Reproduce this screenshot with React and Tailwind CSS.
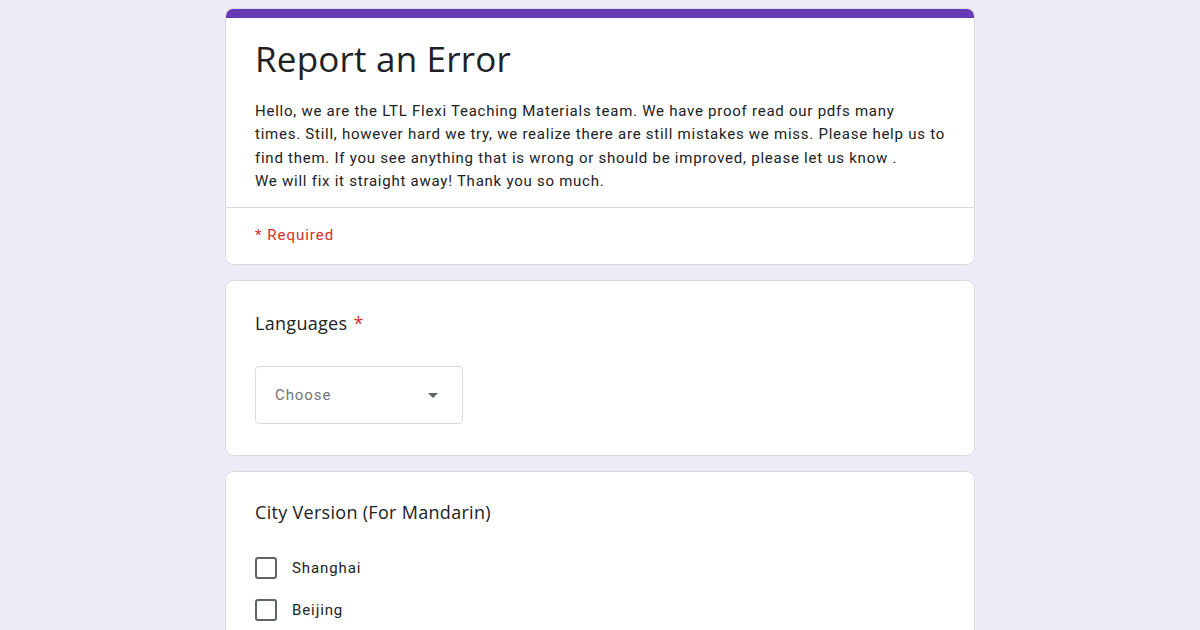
export default function App() {
  return (
    <div className="min-h-screen bg-[#f0ebf8] pt-2">
      <div className="mx-auto w-[750px] flex flex-col gap-[15px]">
        {/* Header card */}
        <div className="bg-white rounded-lg border border-[#dadce0] overflow-hidden">
          <div className="h-[10px] bg-[#673ab7] -mx-px -mt-px" />
          <div className="px-[29px] pt-[20px] pb-[14px]">
            <h1 className="text-[35px] leading-[42px] text-[#202124] font-['Open_Sans',sans-serif] tracking-[0.2px]">
              Report an Error
            </h1>
            <p className="mt-[20px] text-[15px] leading-[23.3px] text-[#202124] font-['Roboto',sans-serif] tracking-[0.75px] -mr-[20px] whitespace-nowrap">
              Hello, we are the LTL Flexi Teaching Materials team. We have proof read our pdfs many
              <br />
              times. Still, however hard we try, we realize there are still mistakes we miss. Please help us to
              <br />
              find them. If you see anything that is wrong or should be improved, please let us know .
              <br />
              We will fix it straight away! Thank you so much.
            </p>
          </div>
          <div className="border-t border-[#dadce0] px-[29px] pt-[14px] pb-[18px]">
            <span className="text-[15px] leading-5 text-[#d93025] font-['Roboto',sans-serif] tracking-[1px]">* Required</span>
          </div>
        </div>

        {/* Languages */}
        <div className="bg-white rounded-lg border border-[#dadce0] px-[29px] pt-[30px] pb-[31px]">
          <div className="text-[18px] leading-6 text-[#202124] font-['Open_Sans',sans-serif] tracking-[0.3px]">
            Languages <span className="text-[#d93025] ml-[1px]">*</span>
          </div>
          <div className="mt-[31px] w-[208px] h-[58px] border border-[#dadce0] rounded-[4px] flex items-center justify-between pl-[19px] pr-[24px]">
            <span className="text-[15px] text-[#70757a] font-['Roboto',sans-serif] tracking-[0.9px]">Choose</span>
            <svg width="10" height="5" viewBox="0 0 10 5">
              <path d="M0 0 L5 5 L10 0 Z" fill="#5f6368" />
            </svg>
          </div>
        </div>

        {/* City Version */}
        <div className="bg-white rounded-lg border border-[#dadce0] px-[29px] pt-[28px] pb-[20px]">
          <div className="text-[18px] leading-6 text-[#202124] font-['Open_Sans',sans-serif] tracking-[0.3px]">
            City Version (For Mandarin)
          </div>
          <div className="mt-[33px] flex flex-col gap-[19px]">
            {["Shanghai", "Beijing"].map((c) => (
              <div key={c} className="flex items-center gap-[15px]">
                <div className="w-[22px] h-[22px] border-2 border-[#5f6368] rounded-[3px]" />
                <span className="text-[15px] text-[#202124] font-['Roboto',sans-serif] tracking-[0.9px]">{c}</span>
              </div>
            ))}
          </div>
        </div>
      </div>
    </div>
  );
}
